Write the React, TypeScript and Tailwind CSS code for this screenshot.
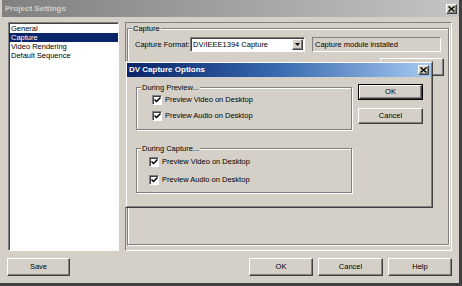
import React from 'react';

const raised =
  'border border-t-white border-l-white border-r-[#404040] border-b-[#404040] shadow-[inset_-1px_-1px_0_#808080]';
const sunken =
  'border border-t-[#808080] border-l-[#808080] border-r-white border-b-white shadow-[inset_1px_1px_0_#404040]';
const etched =
  'border border-[#808080] shadow-[inset_1px_1px_0_#ffffff,1px_1px_0_#ffffff]';

interface BtnProps {
  label: string;
  className?: string;
  isDefault?: boolean;
}

const Btn: React.FC<BtnProps> = ({ label, className = '', isDefault }) => (
  <div className={`${isDefault ? 'border border-black' : ''} ${className}`}>
    <div className={`flex h-full items-center justify-center bg-[#d4d0c8] ${raised}`}>{label}</div>
  </div>
);

const CloseBtn: React.FC<{ className?: string }> = ({ className = '' }) => (
  <div className={`flex items-center justify-center bg-[#d4d0c8] ${raised} ${className}`}>
    <svg width="7" height="6" viewBox="0 0 7 6">
      <path d="M0.5 0.5 L6.5 5.5 M6.5 0.5 L0.5 5.5" stroke="#000" strokeWidth="1.4" fill="none" />
    </svg>
  </div>
);

const Check: React.FC<{ label: string }> = ({ label }) => (
  <div className="flex h-[10px] items-center gap-[3px]">
    <span className={`flex h-[10px] w-[10px] items-center justify-center bg-white ${sunken}`}>
      <svg width="7" height="6" viewBox="0 0 7 6">
        <path d="M0.5 2.5 L2.5 4.5 L6.5 0.5" stroke="#000" strokeWidth="1.5" fill="none" />
      </svg>
    </span>
    <span className="leading-[10px]">{label}</span>
  </div>
);

const listItems = ['General', 'Capture', 'Video Rendering', 'Default Sequence'];

export default function App() {
  return (
    <div className="relative h-[286px] w-[462px] overflow-hidden border-b-[3px] border-r-[3px] border-[#404040] bg-[#d4d0c8] font-['Liberation_Sans',Arial,sans-serif] text-[7.5px] text-black">
      {/* outer title bar (inactive) */}
      <div className="ml-[2px] flex h-[17px] items-center justify-between bg-gradient-to-r from-[#808080] to-[#c4c4c4] pl-[3px] pr-[2px]">
        <span className="text-[8px] font-bold text-[#d4d0c8]">Project Settings</span>
        <CloseBtn className="h-[10px] w-[11px]" />
      </div>

      <div className="flex pl-[8px] pt-[5px]">
        {/* list */}
        <div className={`h-[229px] w-[111px] bg-white pt-[1px] ${sunken}`}>
          {listItems.map((item) => (
            <div
              key={item}
              className={`h-[9px] pl-[2px] leading-[9px] ${item === 'Capture' ? 'bg-[#0a246a] text-white' : ''}`}
            >
              {item}
            </div>
          ))}
        </div>

        {/* settings panel */}
        <div className="ml-[6px] h-[229px] w-[327px] border border-l-[#808080] border-t-[#808080] border-r-white border-b-white pl-[1px] pr-[2px] pt-[1px]">
          <fieldset className={`h-[221px] ${etched}`}>
            <legend className="ml-[4px] bg-[#d4d0c8] px-[1px] leading-[9px]">Capture</legend>
            <div className="flex items-center pl-[7px] pt-[4px]">
              <span className="w-[55px]">Capture Format:</span>
              <div className={`flex h-[15px] w-[115px] items-center bg-white ${sunken}`}>
                <span className="flex-1 pl-[2px]">DV/IEEE1394 Capture</span>
                <div className={`mr-[1px] flex h-[11px] w-[11px] items-center justify-center bg-[#d4d0c8] ${raised}`}>
                  <svg width="5" height="3" viewBox="0 0 5 3">
                    <path d="M0 0 H5 L2.5 3 Z" fill="#000" />
                  </svg>
                </div>
              </div>
              <div className="ml-[7px] flex h-[15px] w-[129px] items-center border border-l-[#808080] border-t-[#808080] border-r-white border-b-white pl-[2px]">
                Capture module installed
              </div>
            </div>
            <div className="flex justify-end pr-[4px] pt-[6px]">
              <Btn label="Settings..." className="h-[18px] w-[64px]" />
            </div>
          </fieldset>
        </div>
      </div>

      {/* bottom buttons */}
      <div className="flex items-center pl-[7px] pt-[7px]">
        <Btn label="Save" className="h-[18px] w-[63px]" />
        <div className="ml-[179px] flex gap-[5px]">
          <Btn label="OK" className="h-[18px] w-[64px]" />
          <Btn label="Cancel" className="h-[18px] w-[65px]" />
          <Btn label="Help" className="h-[18px] w-[64px]" />
        </div>
      </div>

      {/* DV Capture Options dialog, floating over the settings */}
      <div className="absolute left-[125px] top-[61px] h-[147px] w-[308px] border border-l-[#d4d0c8] border-t-[#d4d0c8] border-r-[#404040] border-b-[#404040] bg-[#d4d0c8]">
        <div className="h-full border border-l-white border-t-white border-r-[#808080] border-b-[#808080]">
          <div className="flex h-[14px] items-center justify-between bg-gradient-to-r from-[#0a246a] via-[#3a6ab0] to-[#a6caf0] pl-[2px] pr-[2px]">
            <span className="text-[8px] font-bold text-white">DV Capture Options</span>
            <CloseBtn className="h-[10px] w-[11px]" />
          </div>
          <div className="flex pl-[9px]">
            <div className="w-[216px] pt-[6px]">
              <fieldset className={`h-[47px] ${etched}`}>
                <legend className="ml-[4px] bg-[#d4d0c8] px-[1px] leading-[9px]">During Preview...</legend>
                <div className="flex flex-col gap-[6px] pl-[15px] pt-[3px]">
                  <Check label="Preview Video on Desktop" />
                  <Check label="Preview Audio on Desktop" />
                </div>
              </fieldset>
              <fieldset className={`mt-[14px] h-[49px] ${etched}`}>
                <legend className="ml-[4px] bg-[#d4d0c8] px-[1px] leading-[9px]">During Capture...</legend>
                <div className="flex flex-col gap-[8px] pl-[12px] pt-[4px]">
                  <Check label="Preview Video on Desktop" />
                  <Check label="Preview Audio on Desktop" />
                </div>
              </fieldset>
            </div>
            <div className="ml-[6px] flex flex-col gap-[8px] pt-[7px]">
              <Btn label="OK" isDefault className="h-[16px] w-[65px]" />
              <Btn label="Cancel" className="h-[16px] w-[65px]" />
            </div>
          </div>
        </div>
      </div>
    </div>
  );
}
